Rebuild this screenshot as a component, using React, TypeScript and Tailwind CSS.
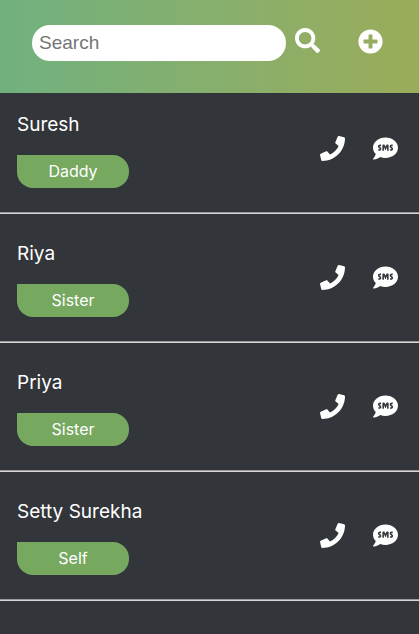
import { FaPhone, FaPlusCircle, FaSearch, FaSms } from "react-icons/fa";

type Contact = { name: string; relation: string };

const contacts: Contact[] = [
  { name: "Suresh", relation: "Daddy" },
  { name: "Riya", relation: "Sister" },
  { name: "Priya", relation: "Sister" },
  { name: "Setty Surekha", relation: "Self" },
];

function Header() {
  return (
    <header className="flex h-[93px] items-start bg-linear-to-r from-[#70b17f] to-[#9aac59] pt-[25px] pr-9 pl-8 text-white">
      <input
        type="search"
        aria-label="Search"
        placeholder="Search"
        className="h-9 min-w-0 flex-1 appearance-none rounded-[18px] bg-white px-[7px] font-['Liberation_Sans',Arial,sans-serif] text-[19px] text-black outline-none placeholder:text-[#757575]"
      />
      <button type="button" aria-label="Find contact" className="ml-[9px] pt-[3px]">
        <FaSearch size={25} />
      </button>
      <button type="button" aria-label="Add contact" className="ml-[38px] pt-1">
        <FaPlusCircle size={25} />
      </button>
    </header>
  );
}

function ContactRow({ name, relation }: Contact) {
  return (
    <li className="flex justify-between border-b border-[#d9d6d6] pt-6 pr-[21px] pb-[25px] pl-[17px] shadow-[inset_0_-1px_0_#9a9a9a] first:pt-4">
      <div>
        <h2 className="text-[19px] leading-8">{name}</h2>
        <span className="mt-[14px] flex h-[33px] w-28 items-center justify-center rounded-2xl rounded-tl-none bg-[#76a85f] pb-0.5 text-[16px]">
          {relation}
        </span>
      </div>
      <div className="flex items-start gap-7 pt-[27px]">
        <button type="button" aria-label={`Call ${name}`}>
          <FaPhone size={25} />
        </button>
        <button type="button" aria-label={`Message ${name}`}>
          <FaSms size={25} />
        </button>
      </div>
    </li>
  );
}

export default function App() {
  return (
    <div className="min-h-screen bg-[#323539] font-[Inter,sans-serif] text-white">
      <Header />
      <main>
        <ul>
          {contacts.map((contact) => (
            <ContactRow key={contact.name} {...contact} />
          ))}
        </ul>
      </main>
    </div>
  );
}
